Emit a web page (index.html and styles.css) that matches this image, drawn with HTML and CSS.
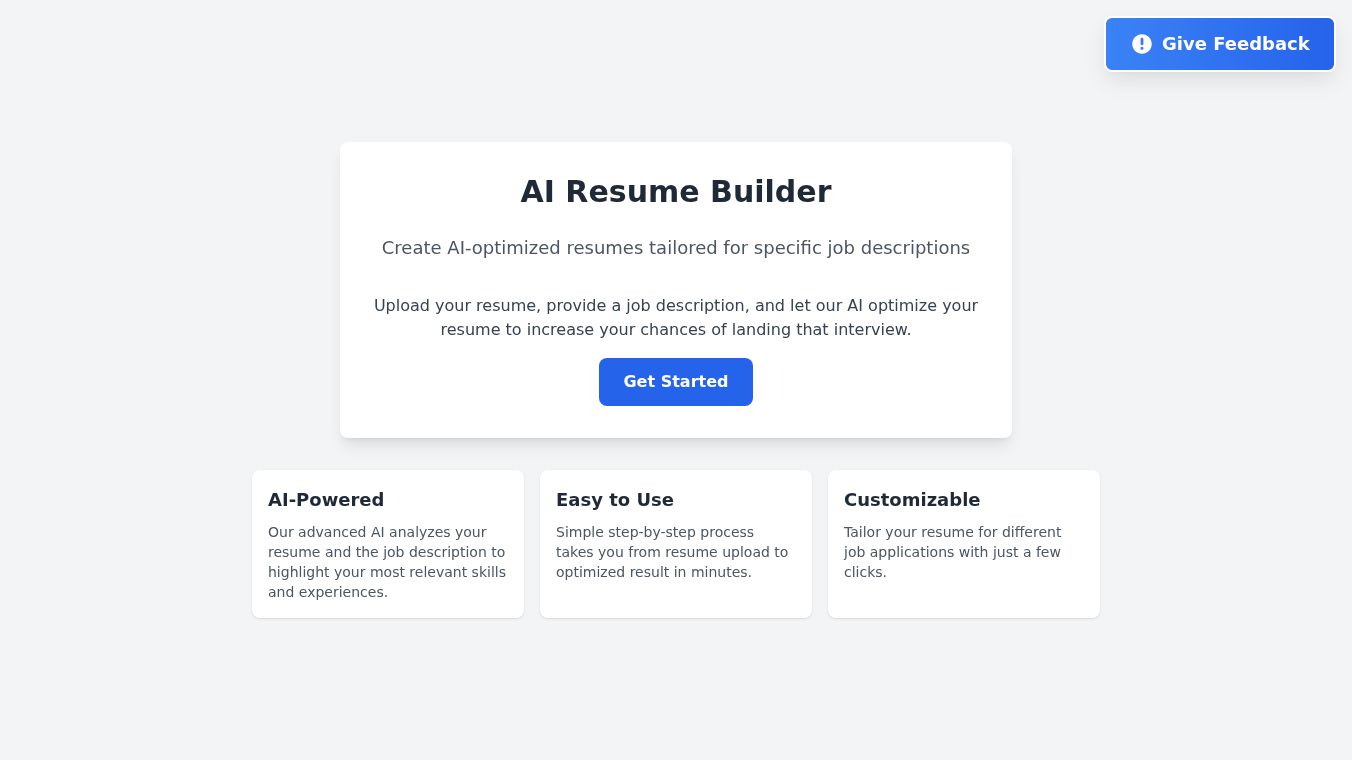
FILE: index.html
```html
<!DOCTYPE html>
<html lang="en">
<head>
    <meta charset="UTF-8">
    <meta name="viewport" content="width=device-width, initial-scale=1.0">
    <title>AI Resume Builder</title>
    <link rel="stylesheet" href="styles.css">
</head>
<body>
    <a class="feedback-btn" href="#">
        <svg class="feedback-icon" viewBox="0 0 24 24" aria-hidden="true">
            <path fill="currentColor" fill-rule="evenodd" clip-rule="evenodd" d="M2.25 12c0-5.385 4.365-9.75 9.75-9.75s9.75 4.365 9.75 9.75-4.365 9.75-9.75 9.75S2.25 17.385 2.25 12zM12 5.8a1.4 1.4 0 0 0-1.4 1.4v4.7a1.4 1.4 0 0 0 2.8 0V7.2A1.4 1.4 0 0 0 12 5.8zm0 8.9a1.55 1.55 0 1 0 0 3.1 1.55 1.55 0 0 0 0-3.1z"/>
        </svg>
        <span>Give Feedback</span>
    </a>

    <main class="container">
        <section class="hero">
            <h1>AI Resume Builder</h1>
            <p class="subtitle">Create AI-optimized resumes tailored for specific job descriptions</p>
            <p class="intro">Upload your resume, provide a job description, and let our AI optimize your resume to increase your chances of landing that interview.</p>
            <a class="start-btn" href="#">Get Started</a>
        </section>

        <section class="features">
            <div class="feature">
                <h3>AI-Powered</h3>
                <p>Our advanced AI analyzes your resume and the job description to highlight your most relevant skills and experiences.</p>
            </div>
            <div class="feature">
                <h3>Easy to Use</h3>
                <p>Simple step-by-step process takes you from resume upload to optimized result in minutes.</p>
            </div>
            <div class="feature">
                <h3>Customizable</h3>
                <p>Tailor your resume for different job applications with just a few clicks.</p>
            </div>
        </section>
    </main>
</body>
</html>
```

FILE: styles.css
```css
* {
    box-sizing: border-box;
}

body {
    font-family: "DejaVu Sans", sans-serif;
    background-color: #f3f4f6;
    color: #1f2937;
    margin: 0;
    min-height: 100vh;
    display: flex;
    align-items: center;
    justify-content: center;
}

a {
    text-decoration: none;
}

.feedback-btn {
    position: fixed;
    top: 16px;
    right: 16px;
    display: flex;
    align-items: center;
    gap: 8px;
    padding: 12px 24px;
    color: white;
    font-size: 18px;
    line-height: 28px;
    font-weight: bold;
    background: linear-gradient(to right, #3b82f6, #2563eb);
    border: 2px solid white;
    border-radius: 8px;
    box-shadow: 0 10px 25px -3px rgba(0,0,0,0.1), 0 4px 10px -4px rgba(0,0,0,0.05);
    will-change: transform;
}

.feedback-icon {
    width: 24px;
    height: 24px;
}

.container {
    width: 848px;
    display: flex;
    flex-direction: column;
    align-items: center;
    gap: 32px;
    will-change: transform;
}

.hero {
    width: 672px;
    padding: 32px;
    text-align: center;
    background: white;
    border-radius: 8px;
    box-shadow: 0 10px 15px -3px rgba(0,0,0,0.1), 0 4px 6px -4px rgba(0,0,0,0.1);
}

h1 {
    margin: 0 0 24px;
    font-size: 30px;
    line-height: 36px;
    color: #1f2937;
}

.subtitle {
    margin: 0 0 32px;
    font-size: 18px;
    line-height: 28px;
    color: #4b5563;
}

.intro {
    margin: 0 0 16px;
    font-size: 16px;
    line-height: 24px;
    color: #374151;
}

.start-btn {
    display: inline-block;
    padding: 12px 24px;
    font-size: 16px;
    line-height: 24px;
    font-weight: bold;
    color: white;
    background-color: #2563eb;
    border-radius: 8px;
}

.features {
    width: 100%;
    display: grid;
    grid-template-columns: repeat(3, 1fr);
    gap: 16px;
}

.feature {
    padding: 16px;
    background: white;
    border-radius: 8px;
    box-shadow: 0 1px 3px 0 rgba(0,0,0,0.1), 0 1px 2px -1px rgba(0,0,0,0.1);
}

.feature h3 {
    margin: 0 0 8px;
    font-size: 18px;
    line-height: 28px;
    color: #1f2937;
}

.feature p {
    margin: 0;
    font-size: 14px;
    line-height: 20px;
    color: #4b5563;
}
```
